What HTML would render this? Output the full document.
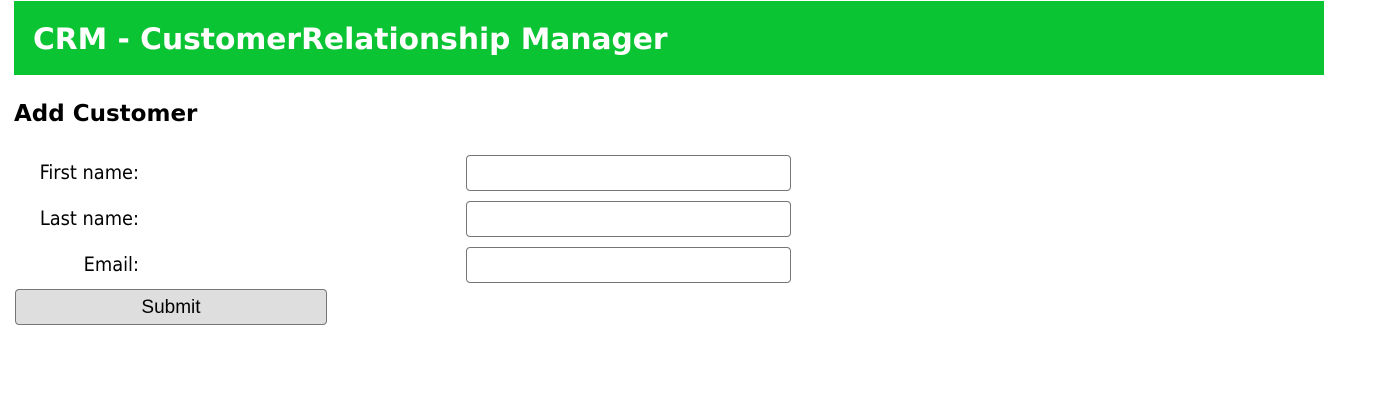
<!DOCTYPE html>
<html><head><meta charset="utf-8"><style>
body{margin:0;background:#fff;width:1382px;height:412px;position:relative;font-family:"DejaVu Sans",sans-serif;}
.hdr{position:absolute;left:14px;top:1px;width:1310px;height:74px;background:#0ac434;}
.hdr h1{margin:0;position:absolute;left:19px;top:21px;color:#fff;font:bold 29.7px "DejaVu Sans",sans-serif;white-space:nowrap;}
h2{position:absolute;left:14px;top:101px;margin:0;font:bold 23px "DejaVu Sans",sans-serif;}
.lbl{position:absolute;right:1243px;font:19.8px "DejaVu Sans Condensed","Liberation Sans",sans-serif;color:#000;white-space:nowrap;}
.in{position:absolute;left:466px;width:325px;height:36px;border:1px solid #767676;border-radius:4px;box-sizing:border-box;background:#fff;}
.btn{position:absolute;left:15px;top:289px;width:312px;height:36px;box-sizing:border-box;border:1px solid #767676;border-radius:4px;background:#dedede;font:19px "Liberation Sans",sans-serif;text-align:center;line-height:36px;color:#000;}
</style></head><body>
<div class="hdr"><h1>CRM - CustomerRelationship Manager</h1></div>
<h2>Add Customer</h2>
<div class="lbl" style="top:161px">First name:</div>
<div class="lbl" style="top:207px">Last name:</div>
<div class="lbl" style="top:253px">Email:</div>
<div class="in" style="top:155px"></div>
<div class="in" style="top:201px"></div>
<div class="in" style="top:247px"></div>
<div class="btn">Submit</div>
</body></html>
